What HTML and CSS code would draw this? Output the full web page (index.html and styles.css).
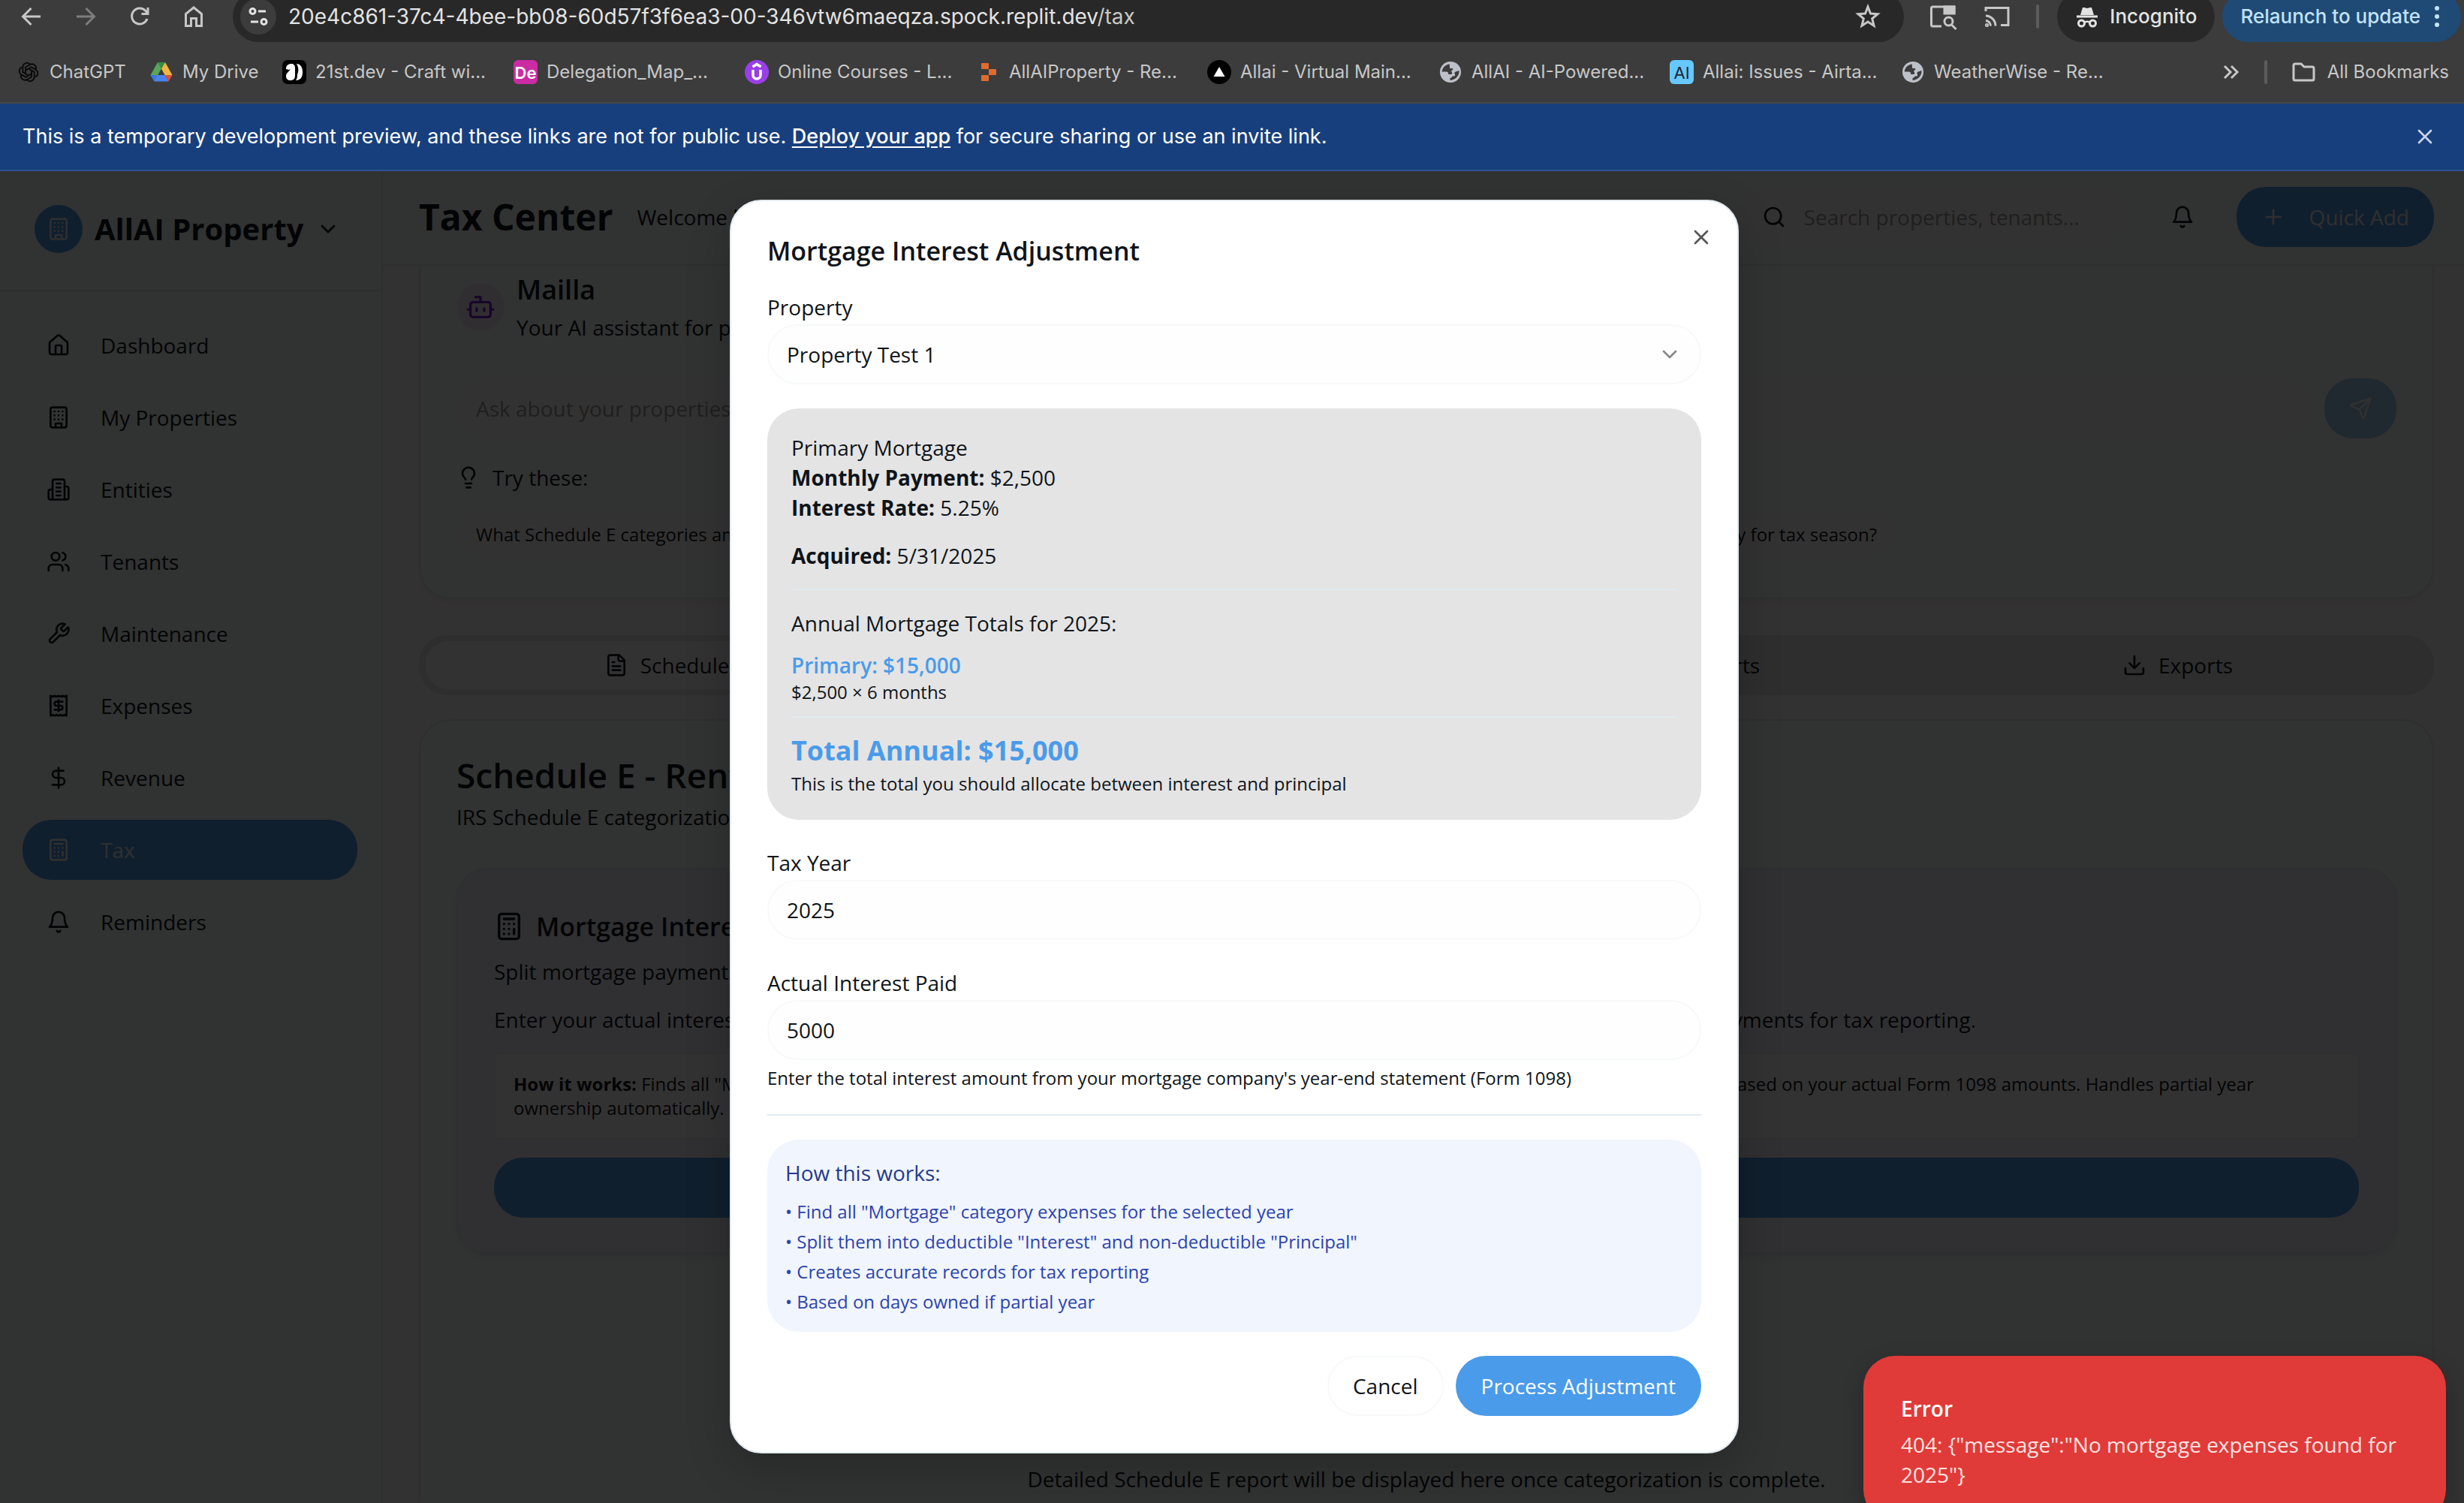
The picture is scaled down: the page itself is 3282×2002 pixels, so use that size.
FILE: index.html
```html
<!DOCTYPE html>
<html lang="en">
<head>
<meta charset="utf-8">
<title>Tax Center</title>
<link rel="stylesheet" href="styles.css">
</head>
<body>
<svg class="sprite" aria-hidden="true">
  <symbol id="home" viewBox="0 0 24 24"><path d="M15 21v-8a1 1 0 0 0-1-1h-4a1 1 0 0 0-1 1v8"/><path d="M3 10a2 2 0 0 1 .709-1.528l7-5.999a2 2 0 0 1 2.582 0l7 5.999A2 2 0 0 1 21 10v9a2 2 0 0 1-2 2H5a2 2 0 0 1-2-2z"/></symbol>
  <symbol id="building" viewBox="0 0 24 24"><rect width="16" height="20" x="4" y="2" rx="2"/><path d="M9 22v-4h6v4M8 6h.01M16 6h.01M12 6h.01M12 10h.01M12 14h.01M16 10h.01M16 14h.01M8 10h.01M8 14h.01"/></symbol>
  <symbol id="entities" viewBox="0 0 24 24"><path d="M6 22V4a2 2 0 0 1 2-2h8a2 2 0 0 1 2 2v18Z"/><path d="M6 12H4a2 2 0 0 0-2 2v6a2 2 0 0 0 2 2h2M18 9h2a2 2 0 0 1 2 2v9a2 2 0 0 1-2 2h-2M10 6h4M10 10h4M10 14h4M10 18h4"/></symbol>
  <symbol id="users" viewBox="0 0 24 24"><path d="M16 21v-2a4 4 0 0 0-4-4H6a4 4 0 0 0-4 4v2"/><circle cx="9" cy="7" r="4"/><path d="M22 21v-2a4 4 0 0 0-3-3.87M16 3.13a4 4 0 0 1 0 7.75"/></symbol>
  <symbol id="wrench" viewBox="0 0 24 24"><path d="M14.7 6.3a1 1 0 0 0 0 1.4l1.6 1.6a1 1 0 0 0 1.4 0l3.77-3.77a6 6 0 0 1-7.94 7.94l-6.91 6.91a2.12 2.12 0 0 1-3-3l6.91-6.91a6 6 0 0 1 7.94-7.94l-3.76 3.76z"/></symbol>
  <symbol id="receipt" viewBox="0 0 24 24"><path d="M4 2v20l2-1 2 1 2-1 2 1 2-1 2 1 2-1 2 1V2l-2 1-2-1-2 1-2-1-2 1-2-1-2 1Z"/><path d="M16 8h-6a2 2 0 1 0 0 4h4a2 2 0 1 1 0 4H8M12 17.5v-11"/></symbol>
  <symbol id="dollar" viewBox="0 0 24 24"><path d="M12 2v20M17 5H9.5a3.5 3.5 0 0 0 0 7h5a3.5 3.5 0 0 1 0 7H6"/></symbol>
  <symbol id="calc" viewBox="0 0 24 24"><rect width="16" height="20" x="4" y="2" rx="2"/><path d="M8 6h8M16 14v4M16 10h.01M12 10h.01M8 10h.01M12 14h.01M8 14h.01M12 18h.01M8 18h.01"/></symbol>
  <symbol id="bell" viewBox="0 0 24 24"><path d="M6 8a6 6 0 0 1 12 0c0 7 3 9 3 9H3s3-2 3-9M10.3 21a1.94 1.94 0 0 0 3.4 0"/></symbol>
  <symbol id="bot" viewBox="0 0 24 24"><path d="M12 8V4H8"/><rect width="16" height="12" x="4" y="8" rx="2"/><path d="M2 14h2M20 14h2M15 13v2M9 13v2"/></symbol>
  <symbol id="bulb" viewBox="0 0 24 24"><path d="M15 14c.2-1 .7-1.7 1.5-2.5 1-.9 1.5-2.2 1.5-3.5A6 6 0 0 0 6 8c0 1 .2 2.2 1.5 3.5.7.7 1.3 1.5 1.5 2.5M9 18h6M10 22h4"/></symbol>
  <symbol id="file" viewBox="0 0 24 24"><path d="M15 2H6a2 2 0 0 0-2 2v16a2 2 0 0 0 2 2h12a2 2 0 0 0 2-2V7Z"/><path d="M14 2v4a2 2 0 0 0 2 2h4M10 9H8M16 13H8M16 17H8"/></symbol>
  <symbol id="download" viewBox="0 0 24 24"><path d="M21 15v4a2 2 0 0 1-2 2H5a2 2 0 0 1-2-2v-4M7 10l5 5 5-5M12 15V3"/></symbol>
  <symbol id="search" viewBox="0 0 24 24"><circle cx="11" cy="11" r="8"/><path d="m21 21-4.3-4.3"/></symbol>
  <symbol id="send" viewBox="0 0 24 24"><path d="M14.536 21.686a.5.5 0 0 0 .937-.024l6.5-19a.496.496 0 0 0-.635-.635l-19 6.5a.5.5 0 0 0-.024.937l7.93 3.18a2 2 0 0 1 1.112 1.11z"/><path d="m21.854 2.147-10.94 10.939"/></symbol>
  <symbol id="plus" viewBox="0 0 24 24"><path d="M5 12h14M12 5v14"/></symbol>
  <symbol id="x" viewBox="0 0 24 24"><path d="M18 6 6 18M6 6l12 12"/></symbol>
  <symbol id="down" viewBox="0 0 24 24"><path d="m6 9 6 6 6-6"/></symbol>
  <symbol id="globe" viewBox="0 0 32 32"><circle cx="16" cy="16" r="14" fill="#bdc1c9"/><path d="M15 5.500C9 6 5 10.500 4.700 15.500h5.500c2.500 0 3 1 3 3.500h3.500c1.500 0 2-1.500 1-3-.8-1.200-.4-2.200.8-2.700 1-.4 1-1.600 0-2.300h-3.300c0-2.500-.7-3.800-.2-5.500z" fill="#3c3c3c"/><path d="M27.500 14c.6 6-4 12.500-12 13v-3c1.500-.2 2.500-1 3-2.500h2.500c1-.3 1.500-1.500.8-2.800-.8-1.500-.3-2.700 1.200-3.200z" fill="#3c3c3c"/></symbol>
</svg>

<div class="toolbar">
  <button class="tool" aria-label="Back"><svg viewBox="0 0 40 40"><path d="M32 20H9M19.500 9 8.500 20l11 11"/></svg></button>
  <button class="tool dim" aria-label="Forward"><svg viewBox="0 0 40 40"><path d="M8 20h23M20.500 9l11 11-11 11"/></svg></button>
  <button class="tool" aria-label="Reload"><svg viewBox="0 0 40 40"><path d="M30 23a10.500 10.500 0 1 1-2-10.500l2.500 3M31 8v8.500h-8.500"/></svg></button>
  <button class="tool" aria-label="Home"><svg viewBox="0 0 40 40"><path d="M9.500 32.500V16.500L20 8l10.500 8.500v16h-7V22.500h-7v10z"/></svg></button>
  <div class="urlbar">
    <span class="siteinfo"><svg viewBox="0 0 48 48"><circle cx="16.500" cy="17" r="3.500"/><path d="M24 17h10"/><circle cx="31.500" cy="31" r="3.500"/><path d="M14 31h10"/></svg></span>
    <span class="url">20e4c861-37c4-4bee-bb08-60d57f3f6ea3-00-346vtw6maeqza.spock.replit.dev<span>/tax</span></span>
    <button class="tool" aria-label="Bookmark this page"><svg viewBox="0 0 40 40"><path d="m20 7 3.500 9 9.500.7-7.300 6.200 2.300 9.300-8-5.200-8 5.200 2.300-9.300L7 16.700l9.500-.7z"/></svg></button>
  </div>
  <div class="extras">
    <button class="tool" aria-label="Search tabs"><svg viewBox="0 0 40 40"><path d="M18 33H6.500a2 2 0 0 1-2-2V9a2 2 0 0 1 2-2H35v10"/><path d="M22 7h13v9H22z" fill="currentColor"/><circle cx="27.500" cy="26.500" r="5.500"/><path d="m31.500 31 6 6"/></svg></button>
    <button class="tool" aria-label="Cast"><svg viewBox="0 0 40 40"><path d="M5 13V8.500h30v23H25M5 19a13.500 13.500 0 0 1 13 13.500M5 25.500a7 7 0 0 1 6.500 7"/><circle cx="6.500" cy="31.500" r="1"/></svg></button>
    <i class="vsep"></i>
  </div>
  <div class="pills">
    <span class="incognito"><svg viewBox="0 0 32 32"><path d="M10 4h2l4 1 4-1h2l3 10H7zM2 14.500h28v3H2z"/><circle cx="8.500" cy="25" r="4" fill="none" stroke="currentColor" stroke-width="3"/><circle cx="23.500" cy="25" r="4" fill="none" stroke="currentColor" stroke-width="3"/><path d="M12 24q4-2.500 8 0" fill="none" stroke="currentColor" stroke-width="2.500"/></svg>Incognito</span>
    <button class="relaunch">Relaunch to update<svg viewBox="0 0 8 32"><circle cx="4" cy="5" r="3"/><circle cx="4" cy="16" r="3"/><circle cx="4" cy="27" r="3"/></svg></button>
  </div>
</div>

<div class="bookmarks">
  <a href="#" class="short"><svg viewBox="0 0 32 32" fill="none" stroke="#0b0b0b" stroke-width="2"><path id="petal" d="M12 17.500V9.500l6-3.500a5.500 5.500 0 0 1 8 6"/><use href="#petal" transform="rotate(60 16 16)"/><use href="#petal" transform="rotate(120 16 16)"/><use href="#petal" transform="rotate(180 16 16)"/><use href="#petal" transform="rotate(240 16 16)"/><use href="#petal" transform="rotate(300 16 16)"/></svg>ChatGPT</a>
  <a href="#" class="short"><svg viewBox="0 0 32 32"><path d="M11 3h10l-5 8.500z" fill="#2f8f46"/><path d="M11 3l5 8.500L6.500 28 1.500 20z" fill="#58a55c"/><path d="M21 3 30.500 20H20.500L16 11.500z" fill="#f2b53f"/><path d="M1.500 20h9l-4 8.500z" fill="#3a76de"/><path d="M10.500 20h10l5 8.500h-19z" fill="#4a83ee"/><path d="M20.500 20h10l-5 8.500z" fill="#d8513c"/></svg>My Drive</a>
  <a href="#"><svg viewBox="0 0 32 32"><rect width="32" height="32" rx="7"/><path d="M5 12c0-5 3-7 7-7 3 0 5 2 5 5v10c0 5-2 7-6 7-4 0-6-2-6-6 0-3 3-5 6-9l-2 1z" fill="#fff"/><path d="M19 5c5 0 8 4 8 11s-3 11-9 11c2-3 2-5 2-8 2-4 2-9-1-14z" fill="#fff"/></svg>21st.dev - Craft wi...</a>
  <a href="#"><span class="fav de">De</span>Delegation_Map_...</a>
  <a href="#"><svg viewBox="0 0 32 32"><circle cx="16" cy="16" r="16" fill="#9a3fe8"/><path d="m10.500 9 5.500-3.500L21.500 9M11 13v7a5 5 0 0 0 10 0v-7" fill="none" stroke="#fff" stroke-width="3.500"/></svg>Online Courses - L...</a>
  <a href="#"><svg viewBox="0 0 32 32" fill="#e06b2d"><rect x="7" y="4" width="10" height="8" rx="1"/><rect x="17" y="12" width="10" height="8" rx="1"/><rect x="7" y="20" width="10" height="8" rx="1"/></svg>AllAIProperty - Re...</a>
  <a href="#"><svg viewBox="0 0 32 32"><circle cx="16" cy="16" r="16"/><path d="m16 9 7.500 13h-15z" fill="#fff"/></svg>Allai - Virtual Main...</a>
  <a href="#"><svg><use href="#globe"/></svg>AllAI - AI-Powered...</a>
  <a href="#"><span class="fav ai">AI</span>Allai: Issues - Airta...</a>
  <a href="#"><svg><use href="#globe"/></svg>WeatherWise - Re...</a>
  <div class="bmend">
    <button class="more" aria-label="More bookmarks"><svg viewBox="0 0 24 24"><path d="m3 4 8 8-8 8M12 4l8 8-8 8"/></svg></button>
    <i class="vsep"></i>
    <button class="all"><svg viewBox="0 0 32 32"><path d="M3 25V7a2 2 0 0 1 2-2h8l4 4h11a2 2 0 0 1 2 2v14a2 2 0 0 1-2 2H5a2 2 0 0 1-2-2z"/></svg>All Bookmarks</button>
  </div>
</div>

<div class="banner">
  <p>This is a temporary development preview, and these links are not for public use. <a href="#">Deploy your app</a> for secure sharing or use an invite link.</p>
  <button aria-label="Dismiss"><svg class="i"><use href="#x"/></svg></button>
</div>

<div class="app">
  <aside class="sidebar">
    <div class="brand"><span class="logo"><svg class="i"><use href="#building"/></svg></span><strong>AllAI Property</strong><svg class="i"><use href="#down"/></svg></div>
    <nav>
      <a href="#"><svg class="i"><use href="#home"/></svg>Dashboard</a>
      <a href="#"><svg class="i"><use href="#building"/></svg>My Properties</a>
      <a href="#"><svg class="i"><use href="#entities"/></svg>Entities</a>
      <a href="#"><svg class="i"><use href="#users"/></svg>Tenants</a>
      <a href="#"><svg class="i"><use href="#wrench"/></svg>Maintenance</a>
      <a href="#"><svg class="i"><use href="#receipt"/></svg>Expenses</a>
      <a href="#"><svg class="i"><use href="#dollar"/></svg>Revenue</a>
      <a href="#" class="current"><svg class="i"><use href="#calc"/></svg>Tax</a>
      <a href="#"><svg class="i"><use href="#bell"/></svg>Reminders</a>
    </nav>
  </aside>
  <div class="main">
    <header class="topbar">
      <h1>Tax Center</h1>
      <span>Welcome back</span>
      <label class="find"><svg class="i"><use href="#search"/></svg><input type="text" placeholder="Search properties, tenants..." aria-label="Search"></label>
      <button class="notify" aria-label="Notifications"><svg class="i"><use href="#bell"/></svg></button>
      <button class="primary add"><svg class="i"><use href="#plus"/></svg>Quick Add</button>
    </header>
    <div class="content">
      <section class="card mailla">
        <div class="who"><span class="botico"><svg class="i big"><use href="#bot"/></svg></span><div><h2>Mailla</h2><p>Your AI assistant for property management</p></div></div>
        <div class="ask"><input type="text" placeholder="Ask about your properties..." aria-label="Ask Mailla"><button class="primary send" aria-label="Send"><svg class="i"><use href="#send"/></svg></button></div>
        <p class="try"><svg class="i"><use href="#bulb"/></svg>Try these:</p>
        <div class="chips"><button>What Schedule E categories am I missing?</button><button>Am I ready for tax season?</button></div>
      </section>
      <div class="tabs">
        <button class="on"><svg class="i"><use href="#file"/></svg>Schedule E</button>
        <button><svg class="i"><use href="#calc"/></svg>Depreciation</button>
        <button><svg class="i"><use href="#file"/></svg>1099 Reports</button>
        <button><svg class="i"><use href="#download"/></svg>Exports</button>
      </div>
      <section class="card schedule">
        <h2>Schedule E - Rental Income</h2>
        <p>IRS Schedule E categorization and reporting</p>
        <div class="adjust">
          <h3><svg class="i big"><use href="#calc"/></svg>Mortgage Interest Adjustment</h3>
          <p>Split mortgage payments into interest and principal</p>
          <p class="lead"><span>Enter your actual interest from Form 1098</span><span>to split the payments for tax reporting.</span></p>
          <div class="note"><p><span><b>How it works:</b> Finds all "Mortgage" expenses and splits them</span><span>based on your actual Form 1098 amounts. Handles partial year</span></p><p>ownership automatically.</p></div>
          <button class="primary wide" aria-label="Adjust mortgage interest"></button>
        </div>
        <p class="later">Detailed Schedule E report will be displayed here once categorization is complete.</p>
      </section>
    </div>
  </div>

  <div class="overlay">
    <form class="dialog" role="dialog" aria-labelledby="dlg">
      <button type="button" class="close" aria-label="Close"><svg class="i"><use href="#x"/></svg></button>
      <h2 id="dlg">Mortgage Interest Adjustment</h2>
      <div class="field"><label for="prop">Property</label><div class="pick"><select id="prop"><option>Property Test 1</option></select><svg class="i"><use href="#down"/></svg></div></div>
      <div class="totals">
        <p class="mid">Primary Mortgage</p>
        <p><b>Monthly Payment:</b> $2,500</p>
        <p><b>Interest Rate:</b> 5.25%</p>
        <p class="acq"><b>Acquired:</b> 5/31/2025</p>
        <div class="annual">
          <p class="mid">Annual Mortgage Totals for 2025:</p>
          <p class="blue semi">Primary: $15,000</p>
          <p class="small">$2,500 × 6 months</p>
          <div class="sum"><p class="blue big-total">Total Annual: $15,000</p><p class="small">This is the total you should allocate between interest and principal</p></div>
        </div>
      </div>
      <div class="field"><label for="year">Tax Year</label><input id="year" type="text" value="2025"></div>
      <div class="field"><label for="paid">Actual Interest Paid</label><input id="paid" type="text" value="5000"><p class="small help">Enter the total interest amount from your mortgage company's year-end statement (Form 1098)</p></div>
      <hr>
      <div class="info">
        <h3>How this works:</h3>
        <p>• Find all "Mortgage" category expenses for the selected year</p>
        <p>• Split them into deductible "Interest" and non-deductible "Principal"</p>
        <p>• Creates accurate records for tax reporting</p>
        <p>• Based on days owned if partial year</p>
      </div>
      <div class="actions"><button type="button" class="cancel">Cancel</button><button type="button" class="process">Process Adjustment</button></div>
    </form>
  </div>

  <div class="toast" role="alert"><strong>Error</strong><p>404: {"message":"No mortgage expenses found for 2025"}</p></div>
</div>
</body>
</html>
```
FILE: styles.css
```css
* { box-sizing: border-box; margin: 0; padding: 0; }
body { height: 100vh; overflow: hidden; display: flex; flex-direction: column; font: 28px/40px "Open Sans", "Noto Sans", sans-serif; color: #0f1419; background: #3c3c3c; }
button, input, select { font: inherit; color: inherit; background: none; border: 0; }
a { color: inherit; text-decoration: none; }
h1, h2, h3 { font-weight: 600; }
.sprite { position: absolute; width: 0; height: 0; }
.i { width: 32px; height: 32px; flex: none; fill: none; stroke: currentColor; stroke-width: 2; stroke-linecap: round; stroke-linejoin: round; }
.i.big { width: 40px; height: 40px; }

/* browser chrome */
.toolbar, .bookmarks, .banner { font-family: Inter, Roboto, sans-serif; flex: none; }
.toolbar { display: flex; align-items: center; height: 68px; margin-top: -12px; padding: 0 4px 0 22px; gap: 32px; color: #c7c7c7; }
.tool { width: 40px; height: 40px; flex: none; }
.tool svg { display: block; width: 40px; height: 40px; fill: none; stroke: currentColor; stroke-width: 3; }
.dim { color: #7d7d7d; }
.urlbar { flex: 1; display: flex; align-items: center; height: 68px; padding: 0 28px 0 10px; border-radius: 34px; background: #282828; }
.siteinfo { width: 48px; height: 48px; border-radius: 24px; background: #3c3c3c; margin-right: 16px; }
.siteinfo svg { display: block; width: 48px; height: 48px; fill: none; stroke: #e3e3e3; stroke-width: 3; }
.url { flex: 1; font-size: 28px; color: #e3e3e3; }
.url span { color: #c7c7c7; }
.extras { display: flex; align-items: center; gap: 32px; }
.vsep { width: 4px; height: 32px; border-radius: 2px; background: #5c5c5c; }
.pills { display: flex; gap: 10px; margin-left: -8px; font-size: 26px; font-weight: 500; }
.incognito, .relaunch { display: flex; align-items: center; height: 68px; border-radius: 34px; }
.incognito { gap: 14px; padding: 0 24px; background: #282828; color: #e3e3e3; }
.incognito svg { width: 32px; height: 32px; fill: currentColor; }
.relaunch { gap: 18px; padding: 0 28px 0 24px; background: #1f4a75; color: #c2e3fb; }
.relaunch svg { width: 8px; height: 32px; fill: currentColor; }
.bookmarks { display: flex; align-items: center; height: 82px; padding: 0 20px 0 22px; border-bottom: 2px solid #474747; font-size: 24px; color: #c7c7c7; }
.bookmarks a { display: flex; align-items: center; gap: 12px; width: 308px; flex: none; white-space: nowrap; }
.bookmarks a.short { width: 177px; }
.bookmarks a svg, .fav { width: 32px; height: 32px; flex: none; }
.fav { border-radius: 6px; text-align: center; line-height: 34px; font-size: 22px; }
.de { background: #cb2ba3; color: #fff; font-weight: 600; }
.ai { background: #66c8ff; color: #223; }
.bmend { margin-left: auto; display: flex; align-items: center; gap: 32px; }
.more, .all { display: flex; align-items: center; gap: 16px; }
.more svg { width: 24px; height: 24px; fill: none; stroke: currentColor; stroke-width: 3; }
.all svg { width: 32px; height: 32px; fill: none; stroke: currentColor; stroke-width: 3; }
.banner { display: flex; align-items: center; justify-content: space-between; height: 90px; padding: 0 36px 0 30px; background: #183f7d; border-bottom: 2px solid #2f5391; color: #fff; font-size: 27px; }
.banner a { text-decoration: underline; text-underline-offset: 4px; font-weight: 500; }
.banner button { height: 32px; color: #c8d3e6; }

/* application shell */
.app { position: relative; flex: 1; min-height: 0; overflow: hidden; display: grid; grid-template-columns: 510px 1fr; background: #fff7f7; }
.sidebar { background: #f2faf7; border-right: 2px solid #e4ecec; }
.brand { display: flex; align-items: center; gap: 16px; height: 160px; padding: 0 46px 4px; border-bottom: 2px solid #e2eaec; font-size: 40px; white-space: nowrap; }
.logo { display: grid; place-items: center; width: 64px; height: 64px; border-radius: 32px; background: #509be5; color: #e6e0e4; flex: none; }
nav { display: flex; flex-direction: column; gap: 16px; padding: 32px 32px 32px 30px; font-weight: 500; }
nav a { display: flex; align-items: center; gap: 40px; height: 80px; padding: 0 32px; border-radius: 38px; }
.primary { background: #509be5; color: #fff; }
nav .current { background: #509be5; color: #f0e8e8; }
.main { display: flex; flex-direction: column; min-width: 0; }
.topbar { display: flex; align-items: center; height: 126px; flex: none; padding: 0 40px 2px 48px; background: #f2faf7; border-bottom: 2px solid #e2eaec; }
.topbar h1 { font-size: 48px; font-weight: 700; margin-right: 32px; }
.find { display: flex; align-items: center; gap: 24px; width: 520px; height: 80px; margin-left: auto; padding: 0 32px; border-radius: 38px; background: #fffafa; }
.find input { flex: 1; min-width: 0; }
::placeholder { color: #999; opacity: 1; }
.notify { width: 80px; height: 32px; margin: 0 32px; }
.primary { display: flex; align-items: center; justify-content: center; height: 80px; border-radius: 38px; }
.add { gap: 32px; padding: 0 33px; color: #f0e8e8; font-weight: 500; }
.content { padding: 0 40px 0 48px; }
.card { background: #f2faf7; border: 2px solid #e2eae8; border-radius: 42px; padding: 48px; box-shadow: 0 4px 6px rgba(0,0,0,.06); }
.mailla { border-top: 0; border-radius: 0 0 42px 42px; padding-top: 8px; height: 444px; }
.who { display: flex; align-items: center; gap: 16px; }
.who h2 { font-size: 36px; line-height: 48px; }
.who p { margin-top: 6px; }
.botico { display: grid; place-items: center; width: 64px; height: 64px; border-radius: 32px; background: #f3e6fb; color: #7a22ce; }
.ask { display: flex; gap: 16px; margin: 48px 0 32px; }
.ask input { flex: 1; height: 80px; padding: 0 26px; border-radius: 38px; background: #fffafa; }
.send { width: 96px; background: #a0c8f0; color: #f3ecec; }
.try { display: flex; align-items: center; gap: 16px; }
.chips { display: flex; justify-content: space-between; max-width: 1918px; margin-top: 24px; font-size: 24px; }
.chips button { height: 64px; padding: 0 26px; border-radius: 32px; background: #fffafa; font-weight: 500; }
.tabs { display: grid; grid-template-columns: repeat(4, 1fr); height: 80px; margin: 48px 0 32px; padding: 8px; border-radius: 38px; background: #e3e3e3; font-weight: 500; }
.tabs button { display: flex; align-items: center; justify-content: center; gap: 16px; border-radius: 32px; }
.tabs .on { background: #fff7f7; }
.schedule > h2 { font-size: 46px; line-height: 48px; }
.schedule > p { margin-top: 12px; }
.adjust { margin-top: 48px; padding: 48px; height: 514px; background: #f0f1fa; border: 2px solid #e4e8f0; border-radius: 42px; box-shadow: 0 4px 6px rgba(0,0,0,.06); }
.adjust h3 { display: flex; align-items: center; gap: 16px; font-size: 34px; line-height: 56px; }
.adjust p { margin-top: 12px; }
.adjust .lead { display: flex; justify-content: space-between; max-width: 1974px; margin-top: 24px; }
.note { margin: 24px 0; padding: 24px; border: 2px solid #f0eaee; border-radius: 8px; background: #fff7f7; font-size: 24px; line-height: 32px; }
.adjust .note p { display: flex; justify-content: space-between; max-width: 2318px; margin: 0; }
.wide { width: 100%; }
.schedule .later { text-align: center; margin-top: 280px; }

/* mortgage dialog */
.overlay { position: absolute; inset: 0; display: flex; justify-content: center; align-items: flex-start; padding: 38px 0 0 6px; background: rgba(0,0,0,.8); }
.dialog { position: relative; display: flex; flex-direction: column; gap: 32px; width: 1344px; padding: 48px; border: 2px solid #e1eaef; border-radius: 42px; background: #fff; box-shadow: 0 20px 60px rgba(0,0,0,.2); }
.dialog h2 { font-size: 34px; line-height: 36px; }
.close { position: absolute; top: 32px; right: 32px; width: 32px; height: 32px; color: #555; }
.close svg { display: block; }
.field { font-size: 32px; line-height: 48px; }
.field label { font-size: 28px; line-height: 28px; font-weight: 500; }
.field input, .field select { display: block; width: 100%; height: 80px; padding: 0 24px; border: 2px solid #f7f9fa; border-radius: 40px; background: #fefefe; font-size: 28px; line-height: 40px; appearance: none; }
.pick { position: relative; }
.pick svg { position: absolute; right: 26px; top: 24px; color: #888; }
.totals { padding: 32px; border-radius: 42px; background: #e4e4e4; }
.mid { font-weight: 500; }
.semi { font-weight: 600; margin-top: 16px; }
.acq { margin-top: 24px; }
.annual { margin-top: 24px; padding-top: 24px; border-top: 2px solid #e1eaef; }
.sum { margin-top: 16px; padding-top: 16px; border-top: 2px solid #e1eaef; }
.blue { color: #4a9bea; }
.small { font-size: 24px; line-height: 32px; }
.big-total { font-size: 36px; line-height: 56px; font-weight: 700; }
.help { margin-top: 8px; }
hr { border: 0; height: 2px; background: #e1eaef; }
.info { display: flex; flex-direction: column; gap: 8px; padding: 24px; border-radius: 42px; background: #f0f5fe; color: #2c43ac; font-size: 24px; line-height: 32px; }
.info h3 { font-size: 28px; line-height: 40px; font-weight: 500; color: #263a8a; margin-bottom: 8px; }
.actions { display: flex; justify-content: flex-end; gap: 16px; font-weight: 500; }
.cancel, .process { height: 80px; padding: 0 34px; border-radius: 40px; }
.cancel { border: 2px solid #f7f9fa; padding: 0 32px; }
.process { background: #4a9bea; color: #fff; }

.toast { position: absolute; right: 24px; top: 1578px; width: 776px; height: 220px; padding: 50px; border-radius: 42px; background: #e03b39; color: #fff; box-shadow: 0 10px 30px rgba(0,0,0,.2); }
.toast strong { display: block; font-weight: 600; }
.toast p { margin-top: 8px; color: #fce4e3; }
```
